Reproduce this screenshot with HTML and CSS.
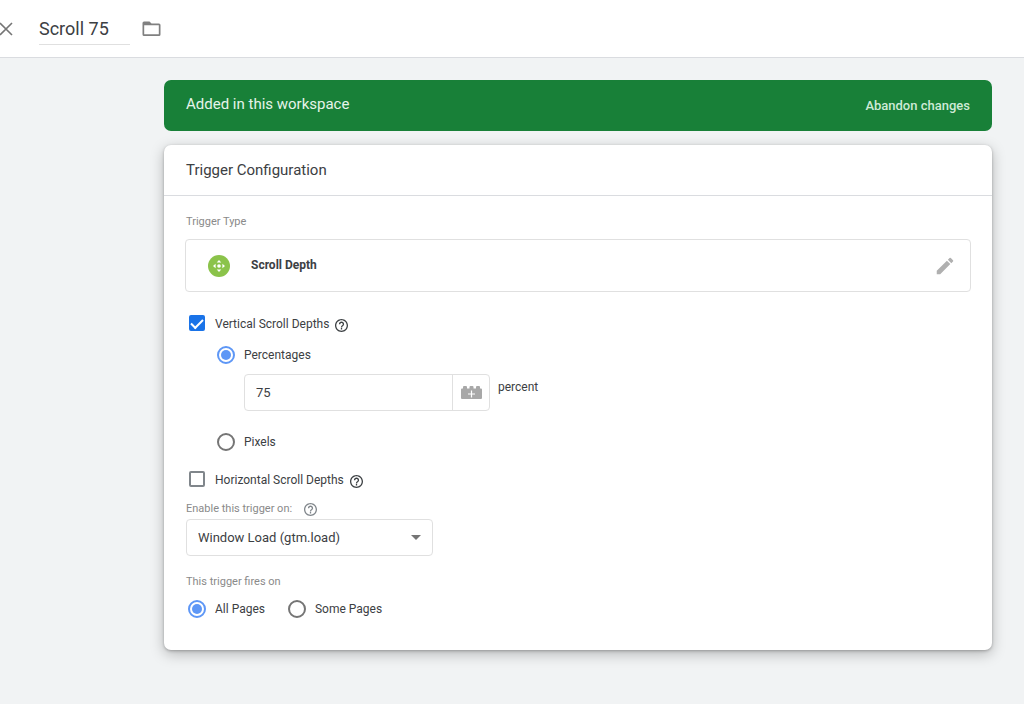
FILE: index.html
```html
<!DOCTYPE html>
<html lang="en">
<head>
    <meta charset="UTF-8">
    <meta name="viewport" content="width=device-width, initial-scale=1.0">
    <title>Scroll 75</title>
    <link rel="stylesheet" href="styles.css">
</head>
<body>
    <header class="topbar">
        <button class="close" type="button" aria-label="Close">
            <svg width="13" height="14" viewBox="0 0 13 14"><path d="M0 1l12 12M12 1L0 13" fill="none" stroke="#757575" stroke-width="1.600"/></svg>
        </button>
        <input class="title-input" type="text" value="Scroll 75" aria-label="Trigger name">
        <button type="button" aria-label="Move to folder">
            <svg width="19" height="16" viewBox="0 0 19 16"><path d="M2 .5h5.500l2 2h7.500a1.500 1.500 0 0 1 1.500 1.500v9.500a1.500 1.500 0 0 1-1.500 1.500h-15a1.500 1.500 0 0 1-1.500-1.500v-11.500a1.500 1.500 0 0 1 1.500-1.500zM2.200 4.200v9.100h14.600v-9.100z" fill="#808080" fill-rule="evenodd"/></svg>
        </button>
    </header>

    <main class="content">
        <div class="banner">
            <span class="banner-text">Added in this workspace</span>
            <button class="banner-action" type="button">Abandon changes</button>
        </div>

        <section class="card">
            <h2 class="card-title">Trigger Configuration</h2>

            <form class="card-body">
                <p class="label">Trigger Type</p>
                <button class="type-box" type="button">
                    <svg width="22" height="22" viewBox="0 0 22 22">
                        <circle cx="11" cy="11" r="11" fill="#8bc34a"/>
                        <g fill="#fff">
                            <circle cx="11" cy="11" r="1.800"/>
                            <path d="M11 5l2.300 2.600h-4.600zM11 17l2.300-2.600h-4.600zM5 11l2.600-2.300v4.600zM17 11l-2.600-2.300v4.600z"/>
                        </g>
                    </svg>
                    <span class="type-name">Scroll Depth</span>
                    <svg class="pencil" width="22" height="22" viewBox="0 0 24 24"><path d="M3 17.250V21h3.750L17.810 9.940l-3.750-3.750L3 17.250zM20.710 7.040a1 1 0 0 0 0-1.410l-2.340-2.340a1 1 0 0 0-1.410 0l-1.830 1.830 3.750 3.750 1.830-1.830z" fill="#b0b0b0"/></svg>
                </button>

                <div class="row vertical-row">
                    <label class="choice"><input class="check" type="checkbox" checked>Vertical Scroll Depths</label>
                    <svg class="help" width="13" height="13" viewBox="0 0 24 24"><use href="#help"/></svg>
                </div>

                <div class="nested">
                    <label class="choice"><input class="radio" type="radio" name="units" checked>Percentages</label>
                    <div class="percent">
                        <div class="input-group">
                            <input class="percent-input" id="percent" type="text" value="75">
                            <button class="variable-btn" type="button" aria-label="Insert variable">
                                <svg width="21" height="13" viewBox="0 0 21 13">
                                    <path d="M0 3.500a1 1 0 0 1 1-1h1v-1.500a1 1 0 0 1 1-1h2a1 1 0 0 1 1 1v1.500h2.500v-1.500a1 1 0 0 1 1-1h2a1 1 0 0 1 1 1v1.500h2.500v-1.500a1 1 0 0 1 1-1h2a1 1 0 0 1 1 1v1.500h1a1 1 0 0 1 1 1v8.500a1 1 0 0 1-1 1h-19a1 1 0 0 1-1-1z" fill="#a8a8a8"/>
                                    <path d="M10.500 4.500v7M7 8h7" stroke="#fff" stroke-width="1.200"/>
                                </svg>
                            </button>
                        </div>
                        <label class="unit" for="percent">percent</label>
                    </div>
                    <label class="choice"><input class="radio" type="radio" name="units">Pixels</label>
                </div>

                <div class="row">
                    <label class="choice"><input class="check" type="checkbox">Horizontal Scroll Depths</label>
                    <svg class="help" width="13" height="13" viewBox="0 0 24 24"><use href="#help"/></svg>
                </div>

                <div class="row enable-row">
                    <label class="label" for="enable">Enable this trigger on:</label>
                    <svg class="help muted" width="13" height="13" viewBox="0 0 24 24"><use href="#help"/></svg>
                </div>
                <div class="select-wrap">
                    <select class="select" id="enable">
                        <option>Window Load (gtm.load)</option>
                    </select>
                </div>

                <p class="label fires-label">This trigger fires on</p>
                <div class="row fires-row">
                    <label class="choice"><input class="radio" type="radio" name="fires" checked>All Pages</label>
                    <label class="choice"><input class="radio" type="radio" name="fires">Some Pages</label>
                </div>
            </form>
        </section>
    </main>

    <!-- shared help icon -->
    <svg class="defs" width="0" height="0">
        <symbol id="help" viewBox="2 2 20 20">
            <path d="M11 18h2v-2h-2v2zm1-16C6.480 2 2 6.480 2 12s4.480 10 10 10 10-4.480 10-10S17.520 2 12 2zm0 18c-4.410 0-8-3.590-8-8s3.590-8 8-8 8 3.590 8 8-3.590 8-8 8zm0-14c-2.210 0-4 1.790-4 4h2c0-1.100.9-2 2-2s2 .9 2 2c0 2-3 1.750-3 5h2c0-2.250 3-2.500 3-5 0-2.210-1.790-4-4-4z"/>
        </symbol>
    </svg>
</body>
</html>
```

FILE: styles.css
```css
* {
    box-sizing: border-box;
}

body {
    margin: 0;
    min-height: 100vh;
    background-color: #f1f3f4;
    color: #3c4043;
    font-family: Roboto, Arial, sans-serif;
    font-size: 12px;
}

button,
input,
select {
    font-family: inherit;
    color: inherit;
}

button {
    border: none;
    background: none;
    padding: 0;
    cursor: pointer;
}

p,
h2 {
    margin: 0;
}

svg {
    display: block;
    flex: none;
}

.defs {
    position: absolute;
}

/* Top bar */
.topbar {
    display: flex;
    align-items: center;
    height: 58px;
    background-color: #fff;
    border-bottom: 1px solid #dadce0;
}

.close {
    margin-right: 26px;
}

.title-input {
    width: 91px;
    height: 33px;
    margin-right: 12px;
    padding: 0;
    border: none;
    border-bottom: 1px solid #e0e0e0;
    background: none;
    font-size: 18px;
    outline: none;
}

/* Content */
.content {
    padding: 22px 32px 32px 164px;
}

.banner {
    display: flex;
    align-items: center;
    justify-content: space-between;
    height: 51px;
    padding: 0 22px;
    margin-bottom: 14px;
    border-radius: 7px;
    background-color: #188038;
    color: #e6f4ea;
}

.banner-text {
    padding-bottom: 3px;
    font-size: 15px;
}

.banner-action {
    color: #ceead6;
    font-size: 13px;
    font-weight: 500;
}

.card {
    border-radius: 7px;
    background-color: #fff;
    box-shadow: 0 1px 3px rgba(0, 0, 0, 0.25), 0 4px 14px rgba(0, 0, 0, 0.25);
}

.card-title {
    padding: 0 22px;
    border-bottom: 1px solid #dadce0;
    font-size: 15px;
    font-weight: 400;
    line-height: 50px;
}

.card-body {
    padding: 18px 21px 31px;
}

.label {
    margin-left: 1px;
    color: #8a8a8a;
    font-size: 11px;
    line-height: 16px;
}

.type-box {
    display: flex;
    align-items: center;
    width: 100%;
    height: 53px;
    margin-top: 9px;
    padding: 0 14px 0 22px;
    border: 1px solid #e0e0e0;
    border-radius: 4px;
}

.type-name {
    margin-left: 21px;
    padding-bottom: 2px;
    font-size: 12px;
    font-weight: 700;
}

.pencil {
    margin-left: auto;
}

/* Choices */
.row {
    display: flex;
    align-items: center;
}

.choice {
    display: flex;
    align-items: center;
    line-height: 20px;
}

.check,
.radio {
    display: grid;
    place-content: center;
    flex: none;
    appearance: none;
    border: 2px solid #80868b;
}

.check {
    width: 16px;
    height: 16px;
    margin: 0 10px 2px 4px;
    border-radius: 2px;
}

.check:checked {
    border-color: #1a73e8;
    background-color: #1a73e8;
}

.check:checked::before {
    content: "";
    width: 10px;
    height: 5px;
    border-left: 2px solid #fff;
    border-bottom: 2px solid #fff;
    transform: translateY(-1px) rotate(-45deg);
}

.radio {
    width: 18px;
    height: 18px;
    margin: 0 9px 0 3px;
    border-color: #757575;
    border-radius: 50%;
}

.radio:checked {
    border-color: #5e97f6;
}

.radio:checked::before {
    content: "";
    width: 10px;
    height: 10px;
    border-radius: 50%;
    background-color: #5e97f6;
}

.help {
    margin: 2px 0 0 6px;
    fill: #3c4043;
}

.muted {
    margin: 0 0 0 12px;
    fill: #80868b;
}

.vertical-row {
    margin-top: 22px;
}

.nested {
    margin: 11px 0 18px 29px;
}

.percent {
    display: flex;
    margin: 9px 0 21px 30px;
}

.input-group {
    display: flex;
    width: 246px;
    height: 37px;
    border: 1px solid #e0e0e0;
    border-radius: 4px;
}

.percent-input {
    flex: 1;
    min-width: 0;
    padding: 0 11px;
    border: none;
    background: none;
    font-size: 13px;
    outline: none;
}

.variable-btn {
    display: grid;
    place-content: center;
    width: 37px;
    border-left: 1px solid #e0e0e0;
}

.unit {
    margin-left: 8px;
    line-height: 26px;
}

/* Trigger event */
.enable-row {
    margin-top: 11px;
}

.select-wrap {
    display: grid;
    align-items: center;
    width: 247px;
    margin: 2px 0 0 1px;
}

.select-wrap::after {
    content: "";
    grid-area: 1 / 1;
    justify-self: end;
    margin-right: 12px;
    border: 5px solid transparent;
    border-top-color: #757575;
    border-bottom: none;
    pointer-events: none;
}

.select {
    grid-area: 1 / 1;
    height: 37px;
    padding: 0 32px 0 11px;
    appearance: none;
    border: 1px solid #e0e0e0;
    border-radius: 4px;
    background-color: #fff;
    font-size: 13px;
}

.fires-label {
    margin-top: 18px;
}

.fires-row {
    gap: 20px;
    margin-top: 9px;
}
```
